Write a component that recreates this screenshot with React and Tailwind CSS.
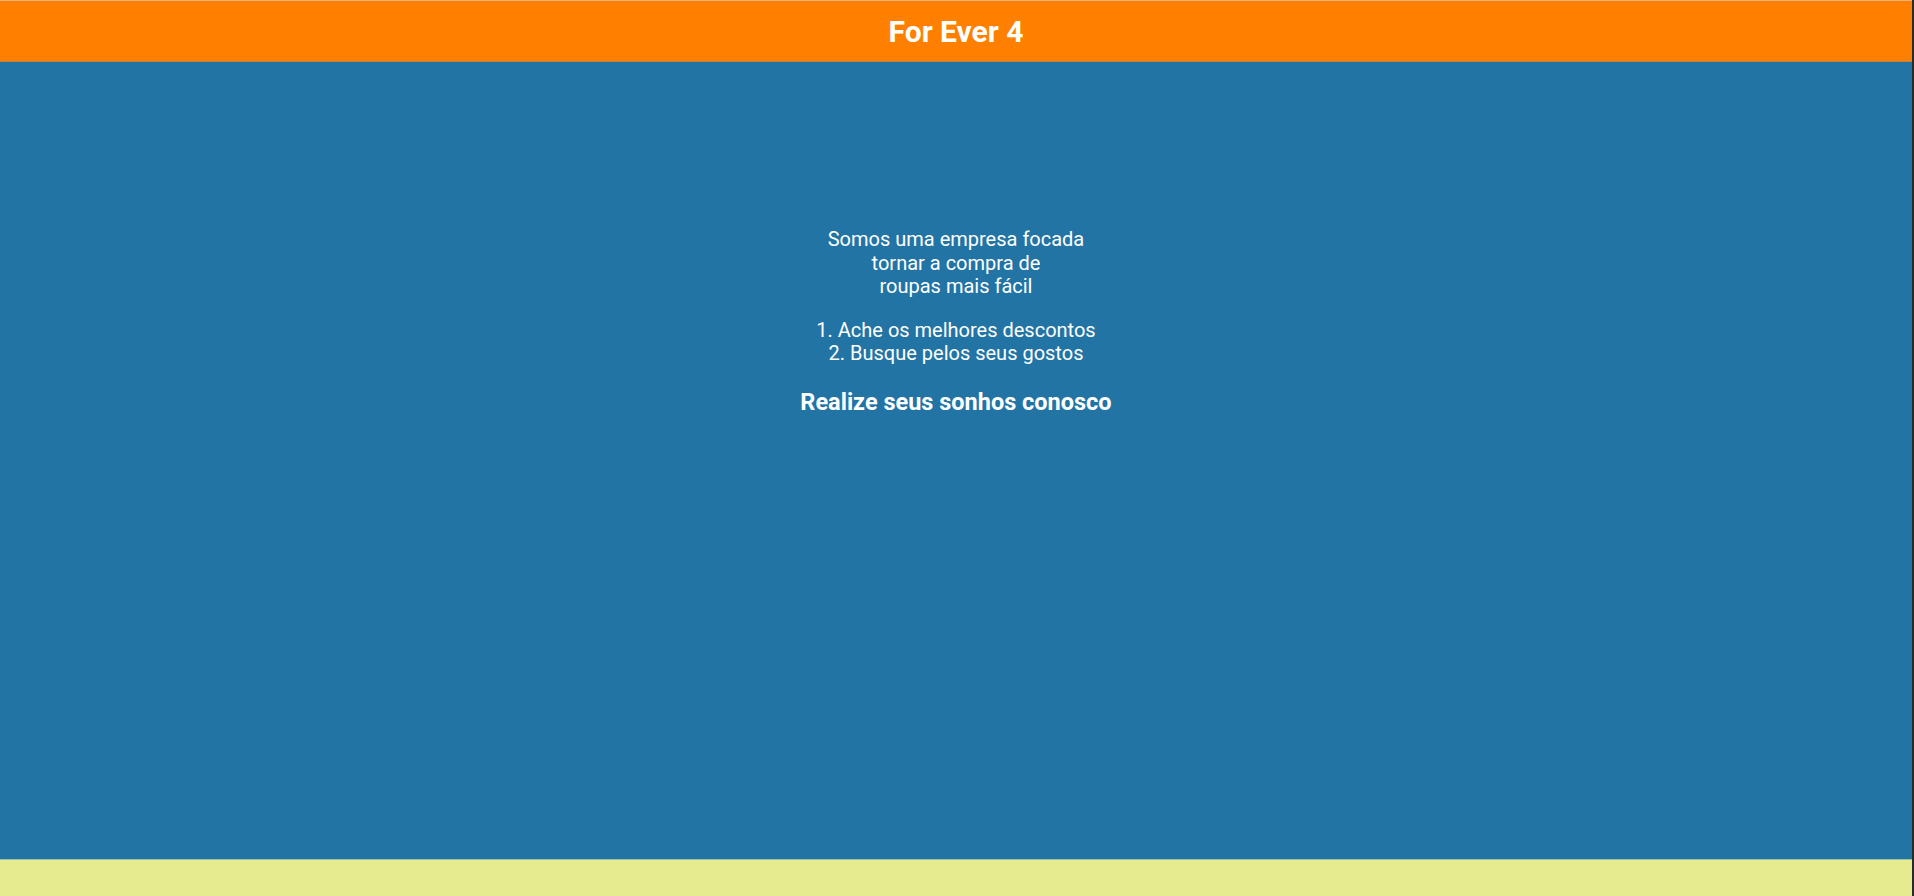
const App = () => {
  return (
    <div
      className="flex h-screen flex-col border-r-2 border-r-[#2a2a2a] bg-[#2274a5]"
      style={{ fontFamily: "Roboto, 'Liberation Sans', sans-serif" }}
    >
      <header className="flex h-[62px] shrink-0 items-center justify-center border-t border-b border-t-[#f3b27a] border-b-[#c9803c] bg-[#ff8000]">
        <h1 className="text-[30px] font-bold text-white">For Ever 4</h1>
      </header>

      <main className="flex flex-1 flex-col items-center pt-[166px] text-center text-white">
        <p className="text-[20px] leading-[23.5px]">
          Somos uma empresa focada
          <br />
          tornar a compra de
          <br />
          roupas mais fácil
        </p>
        <ol className="mt-[20px] text-[20px] leading-[23.5px]">
          <li>1. Ache os melhores descontos</li>
          <li>2. Busque pelos seus gostos</li>
        </ol>
        <h2 className="mt-[19px] text-[23.5px] font-bold">Realize seus sonhos conosco</h2>
      </main>

      <footer className="h-[37px] shrink-0 border-t border-t-[#9cc3a8] bg-[#e7eb90]" />
    </div>
  );
};

export default App;
